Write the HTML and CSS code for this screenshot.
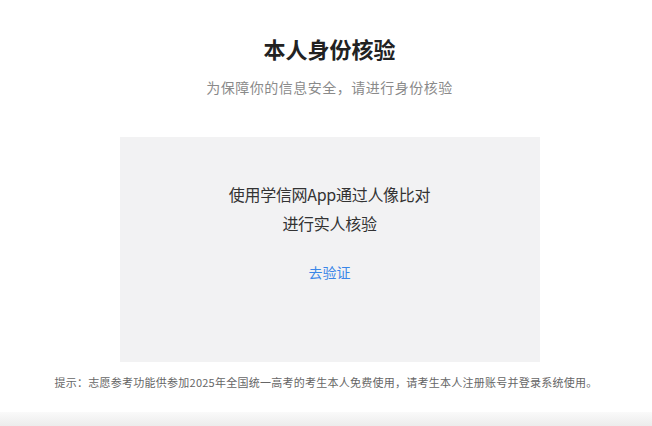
FILE: index.html
```html
<!DOCTYPE html>
<html lang="zh-CN">
<head>
<meta charset="utf-8">
<title>本人身份核验</title>
<link rel="stylesheet" href="styles.css">
</head>
<body>
<div class="page">
  <main class="content">
    <h1 class="title">本人身份核验</h1>
    <p class="subtitle">为保障你的信息安全，请进行身份核验</p>
    <section class="card">
      <p class="card-text">使用学信网App通过人像比对<br>进行实人核验</p>
      <a class="card-link" href="#">去验证</a>
    </section>
    <p class="tip">提示：志愿参考功能供参加2025年全国统一高考的考生本人免费使用，请考生本人注册账号并登录系统使用。</p>
  </main>
  <div class="bottom-shade"></div>
</div>
</body>
</html>
```
FILE: styles.css
```css
html, body {
  margin: 0;
  padding: 0;
  background: #ffffff;
}
body {
  font-family: "Noto Sans CJK SC", "Noto Sans", "Liberation Sans", sans-serif;
  color: #333;
}
.page {
  min-height: 100vh;
  display: flex;
  flex-direction: column;
}
.content {
  display: flex;
  flex-direction: column;
  align-items: center;
  padding-top: 34px;
  padding-left: 7px;
}
.title {
  margin: 0;
  font-size: 22px;
  line-height: 28px;
  font-weight: 700;
  color: #222;
}
.subtitle {
  margin: 15px 0 0;
  font-size: 14px;
  letter-spacing: 0.5px;
  line-height: 20px;
  color: #8a8a8a;
}
.card {
  margin-top: 40px;
  width: 420px;
  height: 225px;
  box-sizing: border-box;
  background: #f2f2f3;
  display: flex;
  flex-direction: column;
  align-items: center;
  padding-top: 43px;
}
.card-text {
  margin: 0;
  font-size: 16px;
  line-height: 29px;
  letter-spacing: -0.3px;
  text-align: center;
  color: #333;
}
.card-link {
  margin-top: 24px;
  font-size: 14px;
  line-height: 20px;
  color: #3a86e8;
  text-decoration: none;
}
.tip {
  margin: 12px 0 0 -7px;
  font-size: 11px;
  letter-spacing: 0.25px;
  line-height: 16px;
  color: #666;
  text-align: center;
}
.bottom-shade {
  margin-top: auto;
  height: 14px;
  background: linear-gradient(to bottom, #fafafa, #ececec);
}
```
